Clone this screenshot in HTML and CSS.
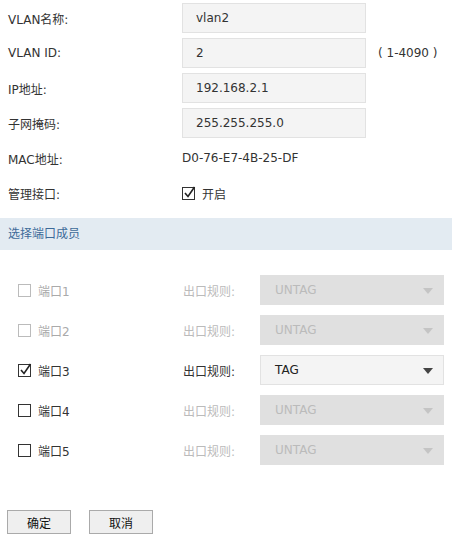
FILE: index.html
```
<!DOCTYPE html>
<html lang="zh-CN">
<head>
    <meta charset="UTF-8">
    <title>VLAN 设置</title>
    <link rel="stylesheet" href="styles.css">
</head>
<body>
    <!-- VLAN basic settings -->
    <div class="form">
        <div class="row">
            <span class="label">VLAN名称:</span>
            <div class="field">vlan2</div>
        </div>
        <div class="row">
            <span class="label">VLAN ID:</span>
            <div class="field">2</div>
            <span class="hint">( 1-4090 )</span>
        </div>
        <div class="row">
            <span class="label">IP地址:</span>
            <div class="field">192.168.2.1</div>
        </div>
        <div class="row">
            <span class="label">子网掩码:</span>
            <div class="field">255.255.255.0</div>
        </div>
        <div class="row">
            <span class="label">MAC地址:</span>
            <span class="value">D0-76-E7-4B-25-DF</span>
        </div>
        <div class="row">
            <span class="label">管理接口:</span>
            <span class="check on">
                <svg width="14" height="14" viewBox="0 0 14 14"><rect x="0.5" y="1.5" width="12" height="12" fill="#fff" stroke="#333"/><polyline points="3,7 6,10.5 12.5,1" fill="none" stroke="#222" stroke-width="1.6"/></svg>
            </span>
            <span class="check-text">开启</span>
        </div>
    </div>

    <div class="section">选择端口成员</div>

    <!-- port members -->
    <div class="ports">
        <div class="port disabled">
            <span class="check"><svg width="14" height="14" viewBox="0 0 14 14"><rect x="0.5" y="1.5" width="12" height="12" fill="#fff" stroke="#bbb"/></svg></span>
            <span class="port-name">端口1</span>
            <span class="rule">出口规则:</span>
            <div class="select">UNTAG<span class="arrow"></span></div>
        </div>
        <div class="port disabled">
            <span class="check"><svg width="14" height="14" viewBox="0 0 14 14"><rect x="0.5" y="1.5" width="12" height="12" fill="#fff" stroke="#bbb"/></svg></span>
            <span class="port-name">端口2</span>
            <span class="rule">出口规则:</span>
            <div class="select">UNTAG<span class="arrow"></span></div>
        </div>
        <div class="port active">
            <span class="check"><svg width="14" height="14" viewBox="0 0 14 14"><rect x="0.5" y="1.5" width="12" height="12" fill="#fff" stroke="#333"/><polyline points="3,7 6,10.5 12.5,1" fill="none" stroke="#222" stroke-width="1.6"/></svg></span>
            <span class="port-name">端口3</span>
            <span class="rule">出口规则:</span>
            <div class="select">TAG<span class="arrow"></span></div>
        </div>
        <div class="port">
            <span class="check"><svg width="14" height="14" viewBox="0 0 14 14"><rect x="0.5" y="1.5" width="12" height="12" fill="#fff" stroke="#333"/></svg></span>
            <span class="port-name">端口4</span>
            <span class="rule">出口规则:</span>
            <div class="select">UNTAG<span class="arrow"></span></div>
        </div>
        <div class="port">
            <span class="check"><svg width="14" height="14" viewBox="0 0 14 14"><rect x="0.5" y="1.5" width="12" height="12" fill="#fff" stroke="#333"/></svg></span>
            <span class="port-name">端口5</span>
            <span class="rule">出口规则:</span>
            <div class="select">UNTAG<span class="arrow"></span></div>
        </div>
    </div>

    <div class="buttons">
        <button class="btn">确定</button>
        <button class="btn">取消</button>
    </div>
</body>
</html>
```
FILE: styles.css
```
body {
    margin: 0;
    font-family: "DejaVu Sans", "Noto Sans CJK SC", sans-serif;
    font-size: 12px;
    color: #333;
    background: #fff;
}

.form {
    display: flex;
    flex-direction: column;
    gap: 5px;
    padding: 3px 0 0 8px;
}
.row {
    display: flex;
    align-items: center;
    height: 30px;
}
.label {
    width: 174px;
}
.field {
    box-sizing: border-box;
    width: 184px;
    height: 30px;
    line-height: 28px;
    padding-left: 13px;
    background: #f4f4f4;
    border: 1px solid #e2e2e2;
}
.hint {
    margin-left: 12px;
}
.check {
    display: flex;
    width: 14px;
    height: 14px;
}
.check-text {
    margin-left: 6px;
}

.section {
    margin-top: 10px;
    height: 32px;
    line-height: 32px;
    padding-left: 8px;
    background: #e3ebf2;
    color: #3d6a99;
}

.ports {
    display: flex;
    flex-direction: column;
    gap: 10px;
    padding: 25px 0 0 18px;
}
.port {
    display: flex;
    align-items: center;
    height: 30px;
}
.port-name {
    width: 145px;
    margin-left: 6px;
}
.rule {
    width: 77px;
    color: #bbb;
}
.active .rule {
    color: #333;
}
.disabled .port-name {
    color: #aaa;
}
.select {
    box-sizing: border-box;
    position: relative;
    width: 184px;
    height: 30px;
    line-height: 28px;
    padding-left: 14px;
    background: #e0e0e0;
    border: 1px solid #e0e0e0;
    color: #bbb;
}
.active .select {
    background: #f4f4f4;
    border-color: #e2e2e2;
    color: #222;
}
.arrow {
    position: absolute;
    right: 10px;
    top: 12px;
    border-left: 5px solid transparent;
    border-right: 5px solid transparent;
    border-top: 6px solid #c4c4c4;
}
.active .arrow {
    border-top-color: #444;
}

.buttons {
    display: flex;
    gap: 18px;
    padding: 45px 0 0 7px;
}
.btn {
    width: 64px;
    height: 24px;
    padding: 0;
    font-family: inherit;
    font-size: 12px;
    color: #111;
    background: #efefef;
    border: 1px solid #aaa;
}
```
